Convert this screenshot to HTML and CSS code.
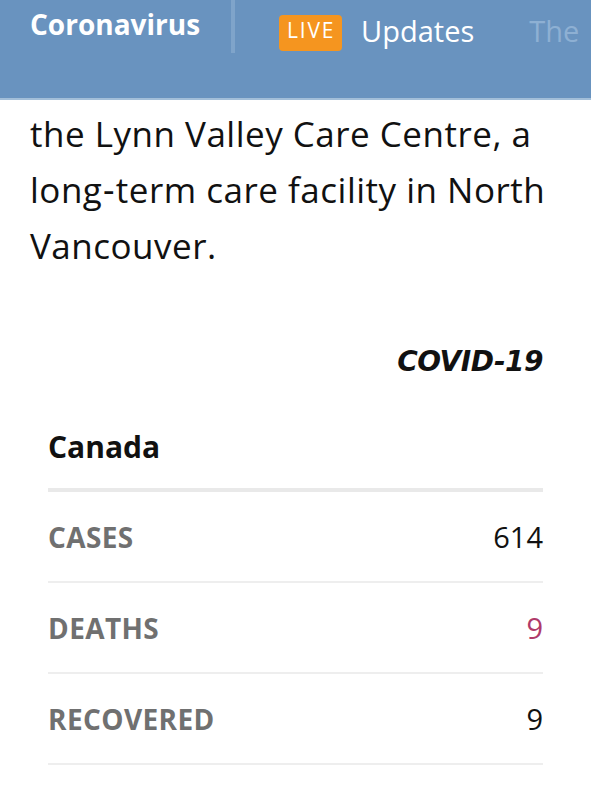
FILE: index.html
```html
<!DOCTYPE html>
<html>
<head>
<meta charset="utf-8">
<link rel="stylesheet" href="styles.css">
</head>
<body>
<header class="topbar">
  <div class="brand">Coronavirus</div>
  <div class="divider"></div>
  <nav class="nav">
    <span class="live">LIVE</span>
    <span class="nav-item">Updates</span>
    <span class="nav-item faded">The</span>
  </nav>
</header>
<main class="content">
  <p class="lead">the Lynn Valley Care Centre, a long&#8209;term care facility in North Vancouver.</p>
  <section class="widget">
    <div class="widget-title">COVID-19</div>
    <div class="region">Canada</div>
    <div class="stat"><span class="label">CASES</span><span class="value">614</span></div>
    <div class="stat"><span class="label">DEATHS</span><span class="value deaths">9</span></div>
    <div class="stat"><span class="label">RECOVERED</span><span class="value">9</span></div>
  </section>
</main>
</body>
</html>
```
FILE: styles.css
```css
html, body { margin: 0; padding: 0; background: #fff; }
body { width: 591px; height: 800px; overflow: hidden; font-family: "Open Sans", "Lato", sans-serif; }
.topbar {
  height: 98px;
  background: #6993bf;
  border-bottom: 2px solid #a3bfd9;
  display: flex;
  align-items: flex-start;
  padding-left: 30px;
  overflow: hidden;
  white-space: nowrap;
}
.brand { color: #fff; font-weight: 700; font-size: 28px; line-height: 38px; margin-top: 5px; }
.divider { width: 4px; height: 53px; background: #7fa4ca; margin-left: 31px; }
.nav { display: flex; align-items: flex-start; margin-left: 44px; }
.live {
  margin-top: 15px;
  background: #f5951f; color: #fff; font-size: 21px; line-height: 30px;
  height: 30px; padding-bottom: 6px;
  border-radius: 4px; width: 63px; text-align: center; letter-spacing: 1.8px; text-indent: 1px;
}
.nav-item { color: #fff; font-size: 29px; line-height: 40px; margin-top: 11px; margin-left: 19px; }
.nav-item.faded { color: #8eb0d3; margin-left: 55px; }
.content { padding: 0 30px; }
.lead { margin: 6px 0 0; font-size: 35px; line-height: 56px; color: #111; letter-spacing: 0.5px; }
.widget { margin: 71px 18px 0 18px; }
.widget-title {
  text-align: right; font-family: "DejaVu Sans", sans-serif; font-weight: 700; font-style: italic;
  font-size: 28px; line-height: 34px; color: #111; letter-spacing: -0.5px;
}
.region { font-weight: 700; font-size: 30px; line-height: 40px; color: #111; margin-top: 48px; padding-bottom: 21px; border-bottom: 4px solid #e9e9e9; }
.stat { display: flex; justify-content: space-between; align-items: center; height: 89px; border-bottom: 2px solid #eeeeee; }
.label { font-weight: 700; font-size: 28px; color: #707070; letter-spacing: 0.4px; }
.value { font-size: 29px; color: #111; }
.value.deaths { color: #b03a6a; }
```
